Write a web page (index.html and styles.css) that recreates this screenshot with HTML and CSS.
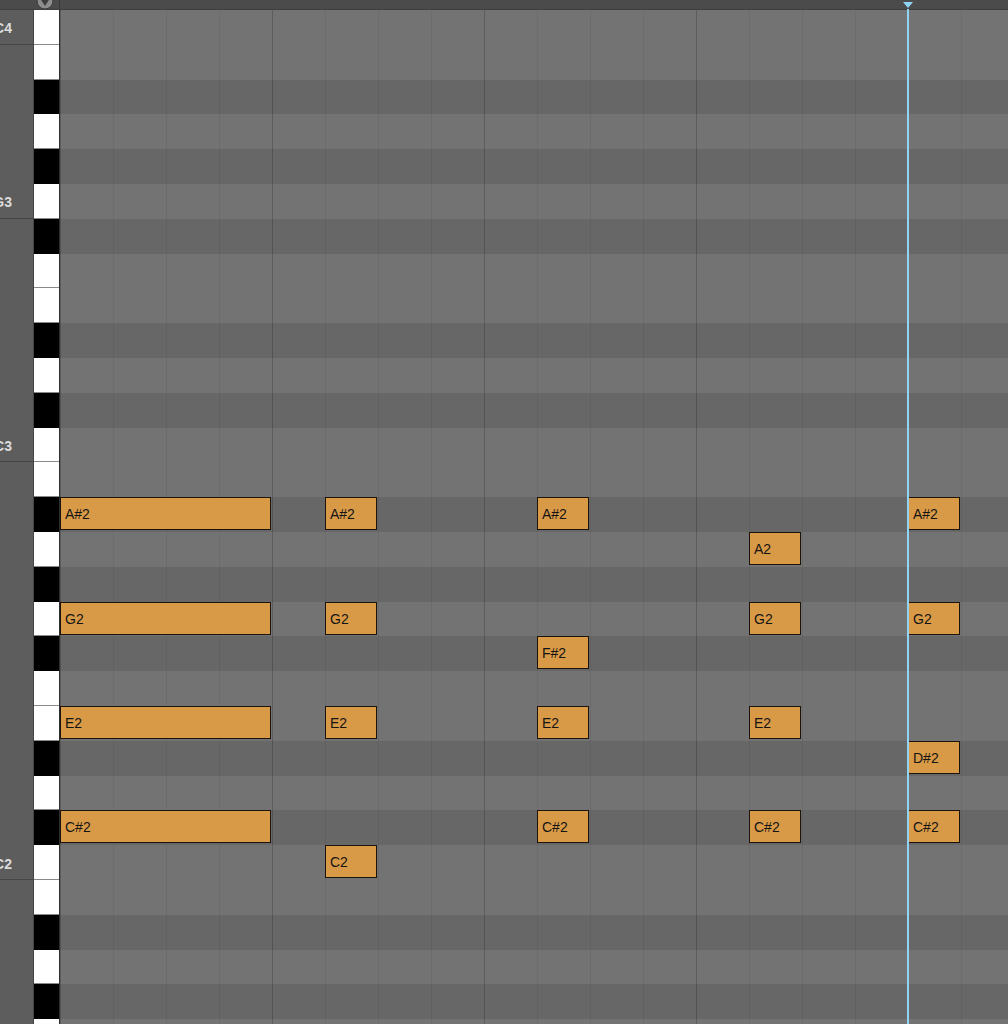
FILE: index.html
```html
<!DOCTYPE html>
<html lang="en">
<head>
    <meta charset="UTF-8">
    <meta name="viewport" content="width=device-width, initial-scale=1.0">
    <title>MIDI Clip</title>
    <link rel="stylesheet" href="styles.css">
</head>
<body>
    <div class="editor">
        <div class="header">
            <div class="header-left">
                <svg class="fold-btn" width="18" height="10" viewBox="0 0 18 10">
                    <circle cx="9" cy="1" r="8" fill="#8c8c8c" stroke="#3a3a3a" stroke-width="1"/>
                    <path d="M4.5 -1 L13.5 -1 L9 6 Z" fill="#3c3c3c"/>
                </svg>
            </div>
            <div class="header-ruler">
                <div class="playhead-mark"></div>
            </div>
        </div>

        <div class="main">
            <div class="labels" id="labels"></div>
            <div class="keys" id="keys"></div>
            <div class="grid" id="grid">
                <div class="playhead"></div>
            </div>
        </div>
    </div>

    <script>
        const names = ['C', 'B', 'A#', 'A', 'G#', 'G', 'F#', 'F', 'E', 'D#', 'D', 'C#'];
        const ROW = 34.8;
        const BEAT = 53;

        // rows from C4 downwards
        const rows = [];
        for (let i = 0; i < 30; i++) {
            const name = names[i % 12];
            const oct = i % 12 === 0 ? 4 - i / 12 : 3 - Math.floor(i / 12);
            rows.push({ name, oct, black: name.includes('#') });
        }

        const labels = document.getElementById('labels');
        const keys = document.getElementById('keys');
        const grid = document.getElementById('grid');

        const labelled = ['C4', 'G3', 'C3', 'C2'];

        rows.forEach(r => {
            const full = r.name + r.oct;

            const lab = document.createElement('div');
            lab.className = 'label-row';
            if (labelled.includes(full)) {
                lab.classList.add('marked');
                lab.textContent = full;
            }
            labels.appendChild(lab);

            const key = document.createElement('div');
            key.className = 'key ' + (r.black ? 'black' : 'white');
            keys.appendChild(key);

            const row = document.createElement('div');
            row.className = 'lane ' + (r.black ? 'dark' : 'light');
            grid.appendChild(row);
        });

        // [note, start beat, length]
        const notes = [
            ['A#2', 0, 4], ['A#2', 5, 1], ['A#2', 9, 1], ['A#2', 16, 1],
            ['A2', 13, 1],
            ['G2', 0, 4], ['G2', 5, 1], ['G2', 13, 1], ['G2', 16, 1],
            ['F#2', 9, 1],
            ['E2', 0, 4], ['E2', 5, 1], ['E2', 9, 1], ['E2', 13, 1],
            ['D#2', 16, 1],
            ['C#2', 0, 4], ['C#2', 9, 1], ['C#2', 13, 1], ['C#2', 16, 1],
            ['C2', 5, 1]
        ];

        notes.forEach(([name, start, len]) => {
            const idx = rows.findIndex(r => r.name + r.oct === name);
            const n = document.createElement('div');
            n.className = 'note';
            n.textContent = name;
            n.style.top = (idx * ROW) + 'px';
            n.style.left = (start * BEAT) + 'px';
            n.style.width = (len * BEAT - 1) + 'px';
            grid.appendChild(n);
        });
    </script>
</body>
</html>
```

FILE: styles.css
```css
body {
    margin: 0;
    padding: 0;
    background-color: #5c5c5c;
    font-family: "Liberation Sans", Arial, sans-serif;
    overflow: hidden;
}
.editor {
    width: 1008px;
    height: 1024px;
    display: flex;
    flex-direction: column;
    overflow: hidden;
}
.header {
    height: 10px;
    flex: none;
    display: flex;
    background-color: #4b4b4b;
    border-bottom: 1px solid #3e3e3e;
    box-sizing: border-box;
}
.header-left {
    width: 60px;
    flex: none;
    display: flex;
    justify-content: flex-end;
    padding-right: 5px;
    box-sizing: border-box;
    border-right: 1px solid #383838;
}
.fold-btn {
    display: block;
}
.header-ruler {
    flex: 1;
    position: relative;
}
.playhead-mark {
    position: absolute;
    left: 843px;
    top: 2px;
    width: 0;
    height: 0;
    border-left: 5px solid transparent;
    border-right: 5px solid transparent;
    border-top: 6px solid #8fd3f5;
}
.main {
    flex: 1;
    display: flex;
    min-height: 0;
}
.labels {
    width: 33px;
    flex: none;
    display: flex;
    flex-direction: column;
    background-color: #5d5d5d;
    overflow: hidden;
}
.label-row {
    height: 34.8px;
    flex: none;
    box-sizing: border-box;
    display: flex;
    align-items: center;
    justify-content: flex-end;
    padding-top: 3px;
    padding-right: 21px;
    font-size: 14px;
    font-weight: bold;
    color: #dcdcdc;
    white-space: nowrap;
}
.label-row.marked {
    border-bottom: 1px solid #464646;
}
.keys {
    width: 27px;
    flex: none;
    display: flex;
    flex-direction: column;
    border-left: 1px solid #444;
    border-right: 1px solid #2e2e2e;
    box-sizing: border-box;
}
.key {
    height: 34.8px;
    flex: none;
    box-sizing: border-box;
}
.key.white {
    background-color: #fff;
    border-bottom: 1px solid #8a8a8a;
}
.key.black {
    background-color: #000;
}
.grid {
    flex: 1;
    position: relative;
    display: flex;
    flex-direction: column;
}
.lane {
    height: 34.8px;
    flex: none;
    background-image:
        repeating-linear-gradient(to right, rgba(0, 0, 0, 0.14) 0 1px, transparent 1px 212px),
        repeating-linear-gradient(to right, rgba(0, 0, 0, 0.06) 0 1px, transparent 1px 53px);
}
.lane.light {
    background-color: #737373;
}
.lane.dark {
    background-color: #676767;
}
.note {
    position: absolute;
    height: 33px;
    box-sizing: border-box;
    background-color: #d99a47;
    border: 1px solid #1c1408;
    color: #141414;
    font-size: 14px;
    line-height: 32px;
    padding-left: 4px;
    white-space: nowrap;
    overflow: hidden;
}
.playhead {
    position: absolute;
    left: 847px;
    top: -1px;
    bottom: 0;
    width: 2px;
    background-color: #8fd3f5;
    z-index: 2;
}
```
